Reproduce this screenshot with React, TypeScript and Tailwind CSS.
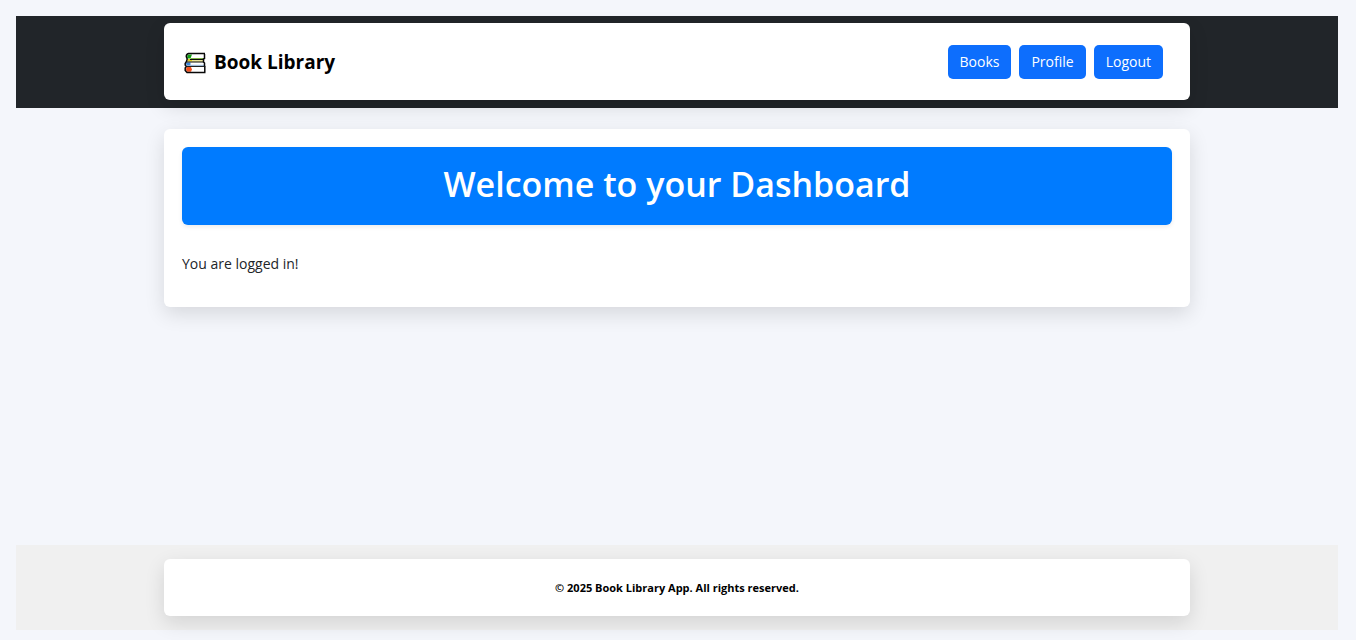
function BooksIcon() {
  return (
    <svg viewBox="0 0 22 22" className="size-[22px] shrink-0" aria-hidden="true">
      <path d="M4 2H20.500V7H19.500V10H20.500V14H21V20H3L1.500 18V15L2 10L3 7L2.500 4Z" fill="#fff" />
      <path d="M3.500 2.500H8L6.500 6.500H3Z" fill="#14a014" />
      <path d="M6.500 6H19.500V7H6.500Z" fill="#7cb342" />
      <path d="M3.500 7H8V9.500H3.500Z" fill="#e3cb1e" />
      <path d="M8 8.500H19.500V9.500H8Z" fill="#d4c832" />
      <path d="M2 10.500H6.500V13.500H2.500Z" fill="#3a86dc" />
      <path d="M6.500 12.800H20V13.700H6.500Z" fill="#8fb8e6" />
      <path d="M2.500 15H7L8 17.500L7 19.800H3L2 18Z" fill="#f4511e" />
      <path
        d="M21 1.500H4.500Q2.300 2 2.300 4.500L3.200 7L2.500 9.500L1.200 11.500V13L2.200 14.500L1.200 16V18.500L3 20.400H21.500M20.500 2V6.500L19.500 7V10L20.500 11V14M20.800 14.500V20"
        fill="none"
        stroke="#080808"
        strokeWidth="1.500"
      />
      <path d="M6 7.500H20M3 10H20M2.500 14.400H21.500" fill="none" stroke="#080808" strokeWidth="1" />
    </svg>
  );
}

const links = ["Books", "Profile", "Logout"];

export default function App() {
  return (
    <div className="flex min-h-screen flex-col bg-[#f4f6fb] pt-4 pr-[18px] pb-[10px] pl-4 font-['Open_Sans','Noto_Sans',sans-serif] text-sm text-[#212529]">
      <header className="bg-[#212529] pt-[7px] pb-2">
        <nav className="mx-auto flex min-h-[77px] w-full max-w-[1026px] items-center justify-between rounded-md bg-white pr-[27px] pl-5 shadow-[0_7px_20px_rgba(0,0,0,0.12)]">
          <a href="#home" className="flex items-center gap-2 pt-[3px] text-[19px] font-bold text-black">
            <BooksIcon />
            Book Library
          </a>
          <div className="flex gap-2">
            {links.map((label) => (
              <a
                key={label}
                href={`#${label.toLowerCase()}`}
                className="rounded-[5px] bg-[#0d6efd] px-3 py-[7px] leading-5 text-white"
              >
                {label}
              </a>
            ))}
          </div>
        </nav>
      </header>

      <main className="mx-auto mt-[21px] w-full max-w-[1026px] rounded-md bg-white px-[18px] pt-[18px] pb-[33px] shadow-[0_7px_20px_rgba(0,0,0,0.12)]">
        <h1 className="rounded-md bg-[#007bff] pt-[15px] pb-[19px] text-center text-[34px] leading-[44px] font-semibold text-white shadow-[0_2px_4px_rgba(0,0,0,0.08)]">
          Welcome to your Dashboard
        </h1>
        <p className="mt-7 leading-[21px]">You are logged in!</p>
      </main>

      <footer className="mt-auto bg-[#f0f0f0] py-[14px]">
        <div className="mx-auto w-full max-w-[1026px] rounded-md bg-white py-5 text-center text-[11px] leading-[17px] font-bold text-black shadow-[0_7px_20px_rgba(0,0,0,0.12)]">
          © 2025 Book Library App. All rights reserved.
        </div>
      </footer>
    </div>
  );
}
